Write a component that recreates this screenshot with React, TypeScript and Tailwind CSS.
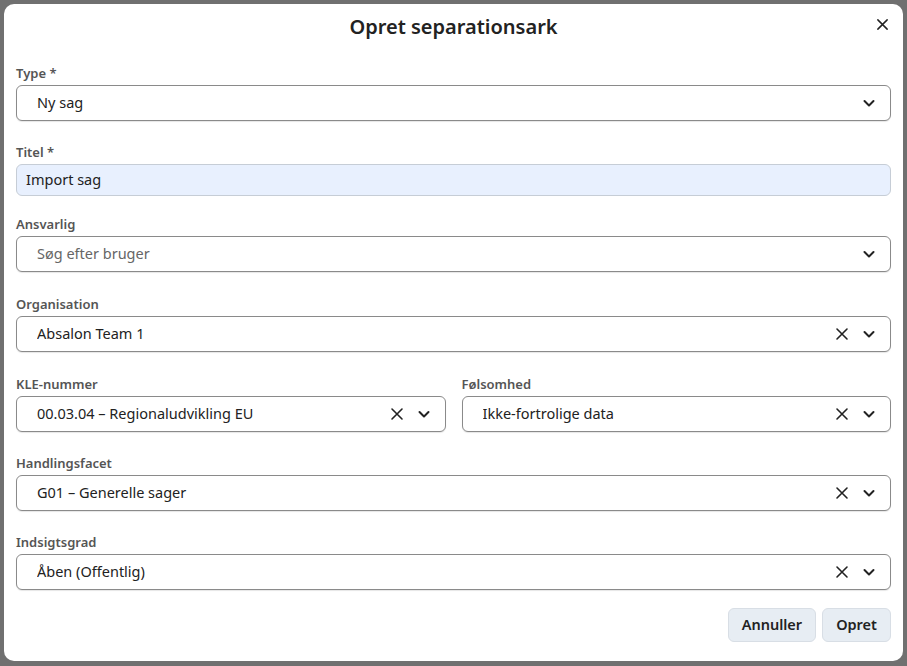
import React from "react";

const Chevron = () => (
  <svg width="16" height="16" viewBox="0 0 16 16" fill="none" stroke="#222" strokeWidth="2" strokeLinecap="round" strokeLinejoin="round"><path d="M3.5 6l4.5 4.5L12.5 6" /></svg>
);
const X = ({ s = 14 }: { s?: number }) => (
  <svg width={s} height={s} viewBox="0 0 14 14" fill="none" stroke="#222" strokeWidth="1.6" strokeLinecap="round"><path d="M2 2l10 10M12 2L2 12" /></svg>
);

function Select({ value, clear, placeholder }: { value: string; clear?: boolean; placeholder?: boolean }) {
  return (
    <div className="h-[36px] rounded-[6px] border border-[#8a8a8a] bg-white flex items-center pl-[20px] pr-[13px] shadow-[0_1px_1px_rgba(0,0,0,0.1)]">
      <span className={`flex-1 text-[14.5px] truncate ${placeholder ? "text-[#666]" : "text-[#222]"}`}>{value}</span>
      {clear && <span className="mr-[12px] flex"><X /></span>}
      <Chevron />
    </div>
  );
}
const Label = ({ t }: { t: string }) => <div className="text-[13px] font-semibold text-[#555] h-[17px] leading-[17px] mb-[3px]">{t}</div>;

export default function App() {
  return (
    <div className="w-[907px] h-[666px] bg-[#707070] p-[4px] pb-[5px]" style={{ fontFamily: '"Noto Sans","Open Sans",sans-serif' }}>
      <div className="h-full bg-white rounded-[10px] px-[12px] relative flex flex-col">
        <div className="h-[46px] flex items-center justify-center text-[20px] font-semibold text-[#222]">Opret separationsark</div>
        <button className="absolute right-[14px] top-[14px]"><X s={13} /></button>
        <div className="mt-[15px]"><Label t="Type *" /><Select value="Ny sag" /></div>
        <div className="mt-[23px]"><Label t="Titel *" />
          <div className="h-[32px] rounded-[6px] border border-[#c6cdd6] bg-[#e8f0fe] flex items-center px-[9px] text-[14.5px] text-[#222]">Import sag</div>
        </div>
        <div className="mt-[20px]"><Label t="Ansvarlig" /><Select value="Søg efter bruger" placeholder /></div>
        <div className="mt-[24px]"><Label t="Organisation" /><Select value="Absalon Team 1" clear /></div>
        <div className="mt-[24px] flex gap-[16px]">
          <div className="flex-1"><Label t="KLE-nummer" /><Select value="00.03.04 – Regionaludvikling EU" clear /></div>
          <div className="flex-1"><Label t="Følsomhed" /><Select value="Ikke-fortrolige data" clear /></div>
        </div>
        <div className="mt-[23px]"><Label t="Handlingsfacet" /><Select value="G01 – Generelle sager" clear /></div>
        <div className="mt-[23px]"><Label t="Indsigtsgrad" /><Select value="Åben (Offentlig)" clear /></div>
        <div className="mt-[18px] flex justify-end gap-[6px]">
          <button className="h-[34px] px-[13px] rounded-[6px] bg-[#e7edf3] border border-[#d8dee5] text-[14.5px] font-semibold text-[#222]">Annuller</button>
          <button className="h-[34px] px-[13px] rounded-[6px] bg-[#e7edf3] border border-[#d8dee5] text-[14.5px] font-semibold text-[#222]">Opret</button>
        </div>
      </div>
    </div>
  );
}
